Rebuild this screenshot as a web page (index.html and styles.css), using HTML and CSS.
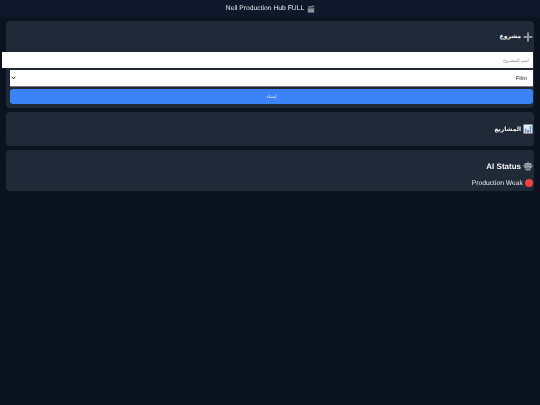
FILE: index.html
```html
<!DOCTYPE html>
<html lang="ar" dir="rtl">
<head>
<meta charset="utf-8">
<title>Neil Production Hub</title>
<link rel="stylesheet" href="styles.css">
</head>
<body>
<header class="top" dir="ltr">
  <span>Neil Production Hub FULL</span>
  <svg class="ico-clap" viewBox="0 0 10 10" aria-hidden="true"><rect x="1" y="4" width="8" height="5.5" fill="#8d949c"/><path d="M1 1.8 9 .6 9.3 2.6 1.2 3.8Z" fill="#555c64"/><path d="M2.5 1.6 3.5 3.5M5 1.2 6 3.1M7.3.9 8.2 2.8" stroke="#c9ced3" stroke-width=".7"/><rect x="1" y="4" width="8" height="1.2" fill="#5d646c"/></svg>
</header>
<main class="stack">
  <section class="card card-form">
    <h2 class="title"><svg class="ico" viewBox="0 0 10 10" aria-hidden="true"><path d="M4 .6h2V4h3.4v2H6v3.4H4V6H.6V4H4Z" fill="#8b939b"/></svg><span class="ar">مشروع</span></h2>
    <input class="field" type="text" placeholder="اسم المشروع">
    <select class="pick"><option>Film</option></select>
    <button class="go" type="button">إنشاء</button>
  </section>
  <section class="card card-list">
    <h2 class="title"><svg class="ico" viewBox="0 0 10 10" aria-hidden="true"><rect x=".5" y=".5" width="9" height="9" fill="#e8eef2"/><rect x="1.8" y="4.5" width="1.6" height="4.2" fill="#4aa3e0"/><rect x="4.2" y="6" width="1.6" height="2.7" fill="#d9534f"/><rect x="6.6" y="2" width="1.6" height="6.7" fill="#4aa3e0"/></svg><span class="ar">المشاريع</span></h2>
  </section>
  <section class="card card-ai">
    <h2 class="title"><svg class="ico" viewBox="0 0 10 10" aria-hidden="true"><rect x="4.6" y=".3" width=".8" height="1.8" fill="#8b939b"/><rect x="1.4" y="2" width="7.2" height="5.6" rx="1.4" fill="#a3abb3"/><rect x=".3" y="3.8" width="1.1" height="2.2" fill="#6f777f"/><rect x="8.6" y="3.8" width="1.1" height="2.2" fill="#6f777f"/><circle cx="3.5" cy="4" r=".8" fill="#4a525a"/><circle cx="6.5" cy="4" r=".8" fill="#4a525a"/><rect x="3.4" y="5.8" width="3.2" height=".7" fill="#4a525a"/><rect x="2.4" y="7.8" width="5.2" height="1.8" rx=".5" fill="#858d95"/></svg><span>AI Status</span></h2>
    <p class="status"><span class="dot"></span><span>Production Weak</span></p>
  </section>
</main>
</body>
</html>
```
FILE: styles.css
```css
* { margin: 0; }
html, body { height: 100%; }
body {
  background: #0b1220;
  color: #e5e7eb;
  font-family: "Liberation Sans", "DejaVu Sans", sans-serif;
  overflow: hidden;
  text-rendering: geometricPrecision;
}
.top, .stack { filter: blur(.3px); }
.top {
  height: 17px;
  background: #0f172a;
  display: flex;
  justify-content: center;
  align-items: center;
  gap: 3px;
  font-size: 6.75px;
  color: #e5e7eb;
  padding-left: 1px;
}
.ico-clap { width: 8px; height: 8px; }
.stack {
  display: flex;
  flex-direction: column;
  gap: 4px;
  padding: 4px 6px 0;
}
.card {
  background: #1f2937;
  border-radius: 4px;
  padding: 0 1px 0 4px;
  box-sizing: border-box;
}
.title {
  display: flex;
  align-items: center;
  gap: 2px;
  font-size: 8px;
  font-weight: 700;
  color: #f3f4f6;
}
.ar { font-size: 6px; }
.ico { width: 10px; height: 10px; flex: none; }
.card-form { height: 87px; }
.card-form .title { height: 31px; }
.field {
  display: block;
  width: 100%;
  height: 16px;
  box-sizing: content-box;
  padding: 0 4px;
  border: 0;
  background: #fff;
  font: 4.5px "DejaVu Sans", sans-serif;
  margin: 0 0 2px;
}
.field::placeholder { color: #8a8a8a; }
.pick {
  display: block;
  width: 100%;
  height: 17px;
  box-sizing: border-box;
  appearance: none;
  border: 0;
  border-bottom: 1px solid #767676;
  background: #fff url("data:image/svg+xml,%3Csvg xmlns='http://www.w3.org/2000/svg' width='5' height='4' viewBox='0 0 5 4'%3E%3Cpath d='M.6.8 2.5 2.9 4.4.8' fill='none' stroke='%23222' stroke-width='1'/%3E%3C/svg%3E") no-repeat 1px center;
  color: #222;
  font: 6px "Liberation Sans", sans-serif;
  padding: 0 6px;
  margin: 0 0 2px;
}
.go {
  display: block;
  width: 100%;
  height: 15px;
  border: 0;
  border-radius: 3px;
  background: #3b82f6;
  color: #dbe7fb;
  font: 4.5px "DejaVu Sans", sans-serif;
  padding: 0;
}
.card-list { height: 34px; }
.card-list .title { height: 34px; }
.card-ai { height: 41px; }
.card-ai .title { height: 26px; padding-top: 3px; box-sizing: content-box; }
.status {
  display: flex;
  align-items: center;
  gap: 2px;
  font-size: 6.75px;
  color: #e5e7eb;
}
.dot { width: 8px; height: 8px; border-radius: 50%; background: #ef4444; flex: none; }
```
